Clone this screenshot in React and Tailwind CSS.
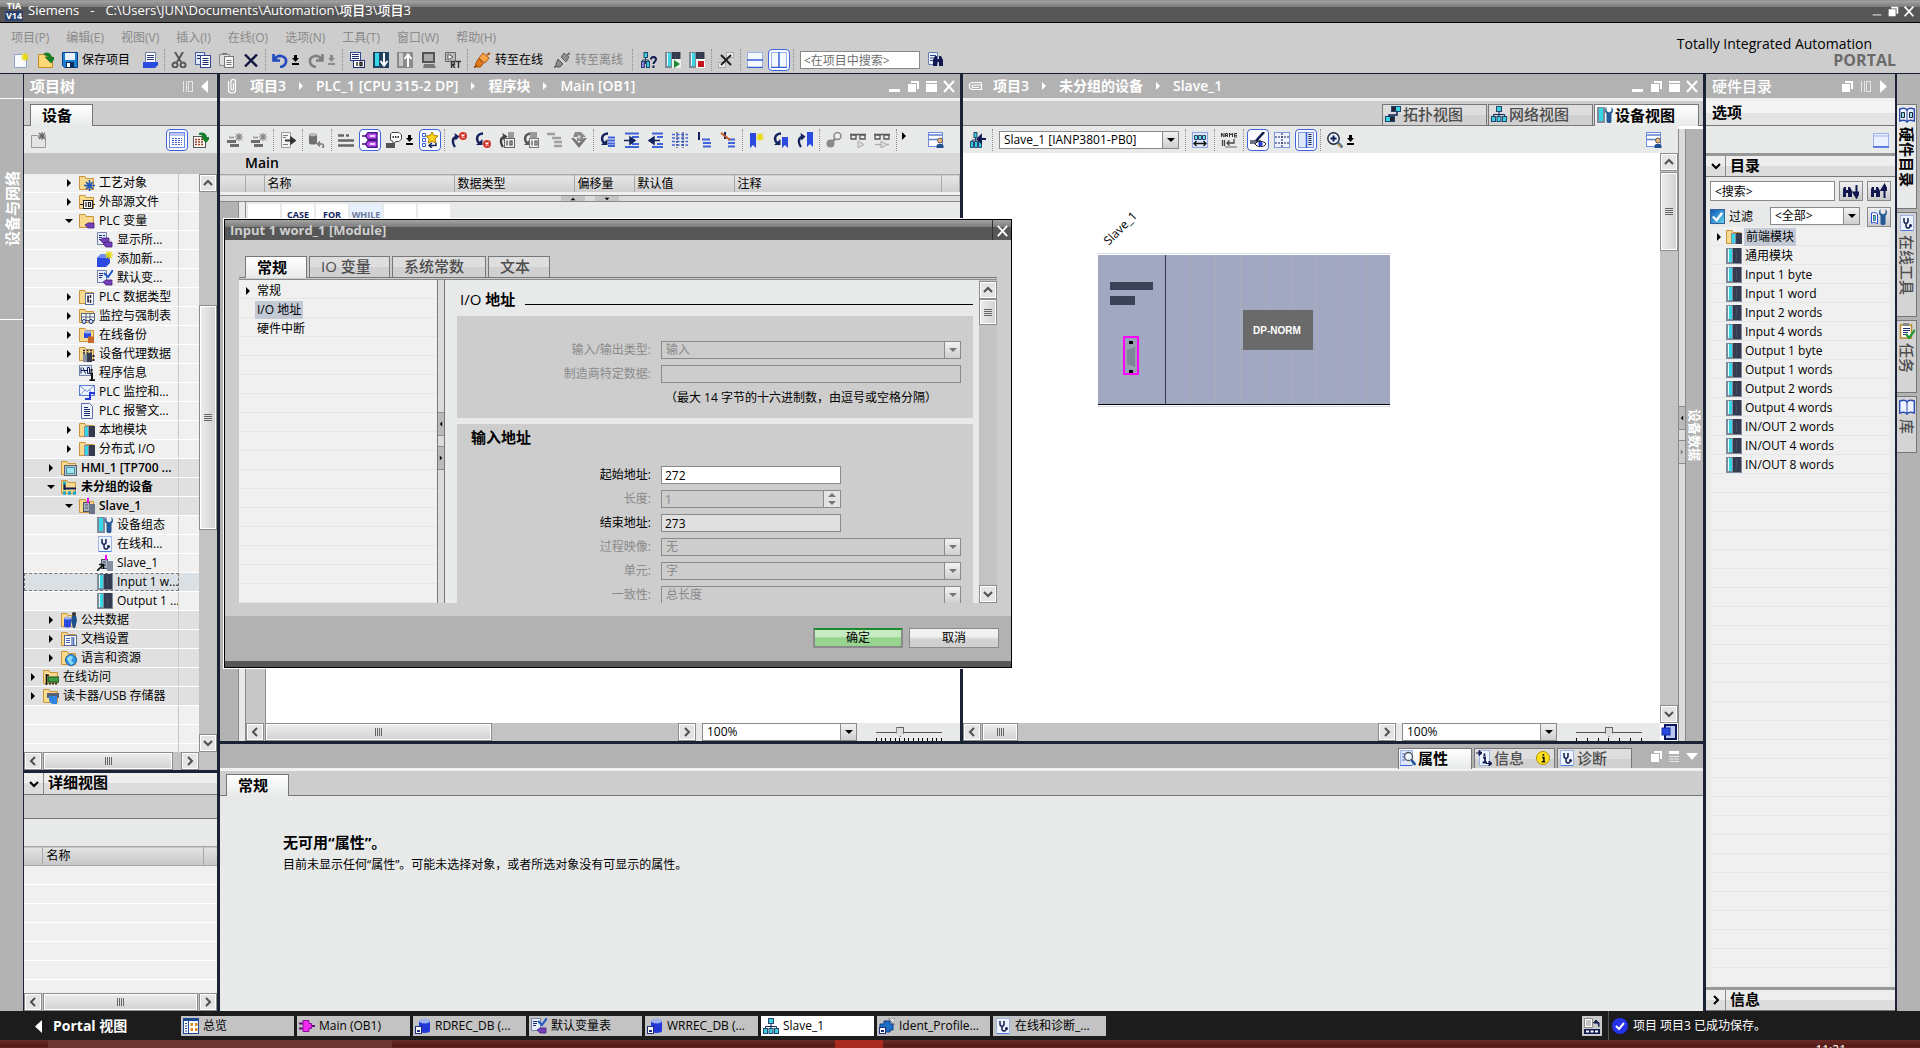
import React from "react";

/* ---------- icon drawings, all on a 16 x 16 grid ---------- */

const folder = (
  <path d="M.5 1.5h5.5l1 2H14.5v11H.5z" fill="#f8d98e" stroke="#c8953a" />
);
const doc = <path d="M2.5 .5h8l3 3v12h-11z" fill="#eef2fb" stroke="#5b6fae" />;
const mod = (
  <g>
    <rect width="16" height="16" fill="#7f899c" />
    <rect x="2" y="1" width="4" height="13" fill="#35d6e6" />
    <rect x="2" y="1" width="1" height="13" fill="#e6fbff" />
    <rect x="7" y="0" width="8" height="15" fill="#343b4f" />
    <rect x="10" y="2" width="1" height="11" fill="#434b62" />
  </g>
);
const star = (x, y, c = "#e8d800") => (
  <path
    d={`M${x} ${y - 4}v8M${x - 4} ${y}h8M${x - 3} ${y - 3}l6 6M${x + 3} ${y - 3}l-6 6`}
    stroke={c}
    strokeWidth="1.2"
  />
);
const lines = (c) => <path d="M8 5.5h7M8 8.5h7M8 11.5h7M8 14h7" stroke={c} strokeWidth="2" />;
const hook = (c = "#14235e") => (
  <g>
    <path d="M8 1.5C1 2 1 8 4 11" stroke={c} strokeWidth="2.4" />
    <path d="M1 13h6.5V7z" fill={c} />
  </g>
);
const hookUp = (c = "#14235e") => (
  <g>
    <path d="M4 15C1 11 1 6 5 5" stroke={c} strokeWidth="2.4" />
    <path d="M3.5 1l5 3.500-4 4z" fill={c} />
  </g>
);
const steth = (
  <g>
    <rect x="1.5" y=".5" width="13" height="15" fill="#eef4ff" stroke="#9db4e4" />
    <path d="M2 15.5h12" stroke="#4f7be0" />
    <path d="M5 3v3c0 3 4 3 4 0V3M7 8v3c0 2.500 3 2.500 4 1" stroke="#111c50" strokeWidth="1.5" />
    <circle cx="11.5" cy="10.5" r="1.5" fill="#111c50" />
  </g>
);
const tag = (x, y, c = "#7440b8") => <path d={`M${x} ${y + 2}l3-2h6v5h-6z`} fill={c} stroke="#45207c" strokeWidth=".8" />;
const net = (
  <g>
    <path d="M8 5v4M2.5 12V8.500h11V12M8 8v4" stroke="#14235e" />
    <rect x="5.5" y=".5" width="5" height="5" fill="#39cfe0" stroke="#26466e" />
    <rect x=".5" y="10.5" width="4" height="5" fill="#39cfe0" stroke="#26466e" />
    <rect x="6" y="10.5" width="4" height="5" fill="#39cfe0" stroke="#26466e" />
    <rect x="11.5" y="10.5" width="4" height="5" fill="#39cfe0" stroke="#26466e" />
  </g>
);
const binoc = (x = 3, c = "#12184f") => (
  <g fill={c}>
    <path d={`M${x} 14V8l2-4h2v10zM${x + 6} 14V4h2l2 4v6z`} />
    <rect x={x + 3} y="7" width="4" height="3" />
  </g>
);
const dbase = (
  <g>
    <path d="M4 3v10c0 2.500 11 2.500 11 0V3z" fill="#2438d8" />
    <ellipse cx="9.5" cy="3" rx="5.5" ry="2.5" fill="#9db2ea" />
    <rect x=".5" y="8.5" width="6" height="7" fill="#fff" stroke="#1b2f78" />
    <rect x="2" y="12" width="3" height="2" fill="#1b2f78" />
  </g>
);
const wrench = <path d="M9.5 0v4l2.500 1.500L14.500 4V0c2 2 2 5 0 6.500v8c0 2-5 2-5 0v-8C7.500 5 7.500 2 9.500 0z" fill="#235b97" />;
const device = (c = "#343b4f") => (
  <g>
    <rect x="4.5" y="4.5" width="6" height="9" fill="#a9b0c0" stroke="#4b5368" />
    <path d="M6 7h3M6 10h3" stroke="#4b5368" />
    <rect x="10" y="6" width="6" height="10" fill={c} />
    <path d="M9 0v5" stroke="#f0f" strokeWidth="2" />
  </g>
);

const ICONS = {
  newp: <g><path d="M.5 2.500h8l4 4v9H.5z" fill="#f7faff" stroke="#8fa3d4" />{star(11, 5)}</g>,
  open: <g><path d="M.5 2.500h6l1 2h7v11H.5z" fill="#ffd977" stroke="#c58b22" /><path d="M6 2.500c4-2.500 7 0 7 4M9 6l4 4 3-4z" stroke="#15802a" strokeWidth="2" fill="#15802a" /></g>,
  save: <g><path d="M.5 .5h15v15h-13l-2-2z" fill="#1d7fd4" stroke="#0d3f86" /><rect x="3" y="1" width="10" height="7" fill="#e8f1fb" /><rect x="4" y="10" width="8" height="6" fill="#0d2b5a" /><rect x="5" y="11" width="3" height="4" fill="#fff" /></g>,
  print: <g><rect x="3.5" y=".5" width="10" height="10" fill="#fff" stroke="#7482aa" /><path d="M5 3.500h7M5 5.500h7M5 7.500h7" stroke="#2a3b80" /><path d="M1 10h15v3l-3 3H1z" fill="#2b4be0" /></g>,
  cut: <path d="M4 0l6 10M12 0L6 10M4 10.500a2.500 2.500 0 1 0 .1 0zM12 10.500a2.500 2.500 0 1 0 .1 0z" stroke="#555" strokeWidth="1.9" />,
  copy: <g><rect x=".5" y=".5" width="9" height="12" fill="#dfe8fb" stroke="#4d63a8" /><rect x="5.5" y="3.5" width="10" height="12" fill="#fff" stroke="#33478f" /><path d="M7.500 6.500h6M7.500 8.500h6M7.500 10.500h6M7.500 12.500h6M2 3.500h3M2 6.500h3" stroke="#1b2c70" /></g>,
  paste: <g><path d="M.5 2.500h10v11H.5z" fill="#ddd" stroke="#8a8a8a" /><rect x="5.5" y="4.5" width="9" height="11" fill="#f4f4f4" stroke="#777" /><path d="M7.500 8.500h5M7.500 10.500h5M7.500 12.500h5M3 1.500h5" stroke="#777" /></g>,
  del: <path d="M2 2.500l12 12M14 2.500l-12 12" stroke="#10163f" strokeWidth="2.4" />,
  undo: <path d="M1.500 2v6.500H8M3 7c4-6 12-2 11 3-.5 2.500-2 4.500-6 5" stroke="#2149c0" strokeWidth="2.6" />,
  redo: <path d="M14.500 2v6.500H8M13 7C9 1 1 5 2 10c.5 2.500 2 4.500 6 5" stroke="#808080" strokeWidth="2.6" />,
  compile: <g><rect x="1.5" y=".5" width="10" height="8" fill="#fff" stroke="#33478f" /><path d="M3 2.500h7M3 4.500h7M3 6.500h7" stroke="#1b2c70" /><rect x="4.5" y="8.5" width="11" height="7" fill="#fff" stroke="#1b2c70" /><path d="M8 10v4M11 10.500h2v3h-2z" stroke="#111" strokeWidth="1.3" /></g>,
  dl: <g><rect width="16" height="16" fill="#20415f" /><rect x="2" y="1" width="4" height="13" fill="#35d6e6" /><path d="M11 1v12M7.500 9l3.500 4.500L14.500 9" stroke="#fff" strokeWidth="2" /></g>,
  ul: <g><rect width="16" height="16" fill="#8b8b8b" /><rect x="2" y="1" width="4" height="13" fill="#c9c9c9" /><path d="M11 15V3M7.500 7L11 2.500 14.500 7" stroke="#fff" strokeWidth="2" /></g>,
  sim: <g><rect x="2" y="1" width="11" height="9" fill="#aaa" stroke="#555" strokeWidth="2" /><path d="M3 12h10l2 4H2z" fill="#777" /></g>,
  rt: <g><path d="M.5 .5h10v9H.5z" fill="#bbb" stroke="#666" /><path d="M3 2l5 3-5 3z" fill="#fff" stroke="#555" /><path d="M6.500 16V9.500H9l.5 3H7l3 3.500M10.500 9.500H16M13.500 9.500V16" stroke="#333" strokeWidth="1.4" /></g>,
  plug: <g><path d="M9 1l6 5-4 5-6-5z" fill="#f8a545" stroke="#b4580d" /><path d="M4.500 6.500l5 4.500-3 4H3l-1.500-3z" fill="#e5781a" stroke="#a34d08" /><path d="M0 16l3-3M13 3l3-2" stroke="#a34d08" strokeWidth="2" /></g>,
  unplug: <g><path d="M10 1l5 4-3 5-5-5z" fill="#8d8d8d" stroke="#666" /><path d="M4 7l5 5-3 3H3l-1-3z" fill="#8d8d8d" stroke="#555" /><path d="M0 16l3-3M13 3l3-2" stroke="#666" strokeWidth="2" /></g>,
  access: <g><path d="M4.500 4v8M1.500 12V8h6v4" stroke="#26466e" /><rect x="3" y=".5" width="3.5" height="5" fill="#39cfe0" stroke="#26466e" /><rect x=".5" y="9.5" width="3" height="6" fill="#9a78d8" stroke="#26466e" /><rect x="5.5" y="9.5" width="3" height="6" fill="#39cfe0" stroke="#26466e" /><path d="M10 7.500c0-3.500 5-3.500 5 0 0 2-2.500 2-2.500 4.500M12.500 13.500V16" stroke="#111c50" strokeWidth="2" /></g>,
  start: <g>{mod}<rect x="7" y="7" width="9" height="9" fill="#e9f5e9" /><path d="M9 8l6 4-6 4z" fill="#1d8a2f" /></g>,
  stop: <g>{mod}<rect x="7" y="7" width="9" height="9" fill="#fff" /><rect x="9" y="9" width="6" height="6" fill="#c4161c" /></g>,
  xref: <g><rect x="8.5" y=".5" width="7" height="5" fill="#eee" stroke="#aaa" /><rect x=".5" y="10.5" width="7" height="5" fill="#eee" stroke="#aaa" /><path d="M3 3l10 10M13 3L3 13" stroke="#222" strokeWidth="2" /></g>,
  splitH: <g><rect x=".5" y=".5" width="15" height="15" fill="#f4f8ff" stroke="#9db2ea" /><path d="M0 8h16M0 15.500h16" stroke="#3560d8" strokeWidth="1.5" /></g>,
  splitV: <g><rect x=".5" y=".5" width="15" height="15" fill="#f4f8ff" stroke="#9db2ea" /><path d="M8 0v16M0 15.500h16" stroke="#3560d8" strokeWidth="1.5" /></g>,
  find: <g><path d="M.5 .5h9v12h-9z" fill="#e7eefc" stroke="#6d80b8" /><path d="M2 3.500h6M2 6h6M2 8.500h3" stroke="#33478f" />{binoc(5)}</g>,
  newGray: <g><path d="M.5 3.500h6l1 2h7v10H.5z" fill="#e4e4e4" stroke="#999" />{star(11, 4, "#666")}</g>,
  list: <g><rect x=".5" y=".5" width="15" height="15" fill="#fff" stroke="#6f8be0" /><rect x="1" y="1" width="14" height="3" fill="#b7c6f2" /><path d="M3 6.500h10M3 8.500h10M3 10.500h10M3 12.500h10" stroke="#3f5fb8" strokeDasharray="2 1" /></g>,
  gridArrow: <g><rect x=".5" y="4.5" width="12" height="11" fill="#fff" stroke="#555" /><path d="M2 7.500h9M2 10h9M2 12.500h9" stroke="#a33a1a" strokeWidth="1.3" strokeDasharray="2 1" /><path d="M6 2c5-1.500 7 1 7 4M10 6l3 3.500L16 6z" stroke="#15802a" strokeWidth="2" fill="#15802a" /></g>,
  addRow: <g><path d="M0 9.500h9M3 13.500h9" stroke="#6d6d6d" strokeWidth="3" /><path d="M2 5.500h5" stroke="#a5a5a5" strokeWidth="2" />{star(12, 5, "#888")}</g>,
  goDoc: <g><path d="M1.500 .5h9v15h-9z" fill="#f4f4f4" stroke="#9a9a9a" /><path d="M3 3.500h5M3 5.500h3M3 12.500h5" stroke="#777" /><path d="M5 8.500h7M11 5.500l4 3-4 3z" stroke="#333" strokeWidth="1.8" fill="#333" /></g>,
  dbBack: <g><path d="M0 2v9c0 2 8 2 8 0V2z" fill="#707070" /><ellipse cx="4" cy="2.5" rx="4" ry="1.8" fill="#bbb" /><path d="M9 12h4c2 0 2 3.500 0 3.500M11 9.500L8.500 12l2.500 2.500" stroke="#777" strokeWidth="1.5" /></g>,
  blocks: <path d="M0 3.500h6M0 8.500h16M0 13.500h16M8 3.500h3" stroke="#666" strokeWidth="2.5" />,
  tags: <g><path d="M6 .7h9v6.600H6L3.500 4zM6 8.700h9v6.600H6L3.500 12z" fill="#b74fe8" stroke="#4a1488" strokeWidth="1.4" /><path d="M0 4h4M0 12h4" stroke="#4a1488" strokeWidth="1.6" /><path d="M8 4h5M8 12h5" stroke="#fff" strokeWidth="1.5" /></g>,
  comment: <g><path d="M6 .5h7l2.500 2.500v4L13 9.500h-3L7 12V9.500L4.500 8V2z" fill="#fff" stroke="#444" /><path d="M6.500 5h7" stroke="#444" strokeDasharray="1.5 1" strokeWidth="2" /><path d="M0 11h9v5H0z" fill="#555" /></g>,
  fav: <g><path d="M.5 1.500h3v3h-3zM.5 6.500h3v3h-3zM.5 11.500h3v3h-3z" stroke="#3560d8" /><path d="M10 0l2 3.500 4 .5-3 3 .7 4L10 9.300 6.300 11 7 7 4 4l4-.5z" fill="#ffd21c" stroke="#b17c00" /><path d="M14 11v2.500H8M10 11l-3 2.500 3 2.500" stroke="#14235e" strokeWidth="1.5" /></g>,
  errUp: <g>{hookUp()}<circle cx="12" cy="4" r="4" fill="#d2332a" /><path d="M10.500 2.500l3 3M13.500 2.500l-3 3" stroke="#fff" strokeWidth="1.3" /></g>,
  errDn: <g>{hook()}<circle cx="12" cy="12" r="4" fill="#d2332a" /><path d="M10.500 10.500l3 3M13.500 10.500l-3 3" stroke="#fff" strokeWidth="1.3" /></g>,
  upDoc: <g>{hookUp("#444")}<rect x="9" y="0" width="6" height="7" fill="#999" /><rect x="5.5" y="6.5" width="10" height="9" fill="#eee" stroke="#666" /><path d="M8 8.500v5M11 9h2v4h-2z" stroke="#444" strokeWidth="1.2" /></g>,
  dnDoc: <g>{hook("#555")}<rect x="7" y="0" width="7" height="6" fill="#999" /><rect x="6.5" y="6.5" width="9" height="9" fill="#eee" stroke="#777" /><path d="M9 8.500v5M12 9h2v4h-2z" stroke="#555" strokeWidth="1.2" /></g>,
  indent: <path d="M0 2h8M5 6h9M7 10h8M7 14h8" stroke="#a0a0a0" strokeWidth="2.3" />,
  expand: <g><path d="M4 0h6l5 5h-3v4H6V5H2z" fill="#8a8a8a" /><path d="M0 6h3l5 5 5-5h3l-8 10z" fill="#777" /><path d="M8 3v4M6 5h4" stroke="#e8e8e8" /></g>,
  gotoLine: <g>{hook()}{lines("#3f63dc")}</g>,
  indR: <g><path d="M1 1.500h14M8 5h7M8 12h7M1 15h14" stroke="#3f63dc" strokeWidth="2" /><path d="M0 8.500h7M6 5l5 3.500L6 12z" stroke="#14235e" strokeWidth="1.5" fill="#14235e" /></g>,
  indL: <g><path d="M4 1.500h11M9 5h6M9 12h6M4 15h11" stroke="#3f63dc" strokeWidth="2" /><path d="M12 8.500H4M6 5L1 8.500 6 12z" stroke="#14235e" strokeWidth="1.5" fill="#14235e" /></g>,
  align: <g><path d="M0 2.500h16M0 6h16M0 9.500h16M0 13h16" stroke="#3f63dc" strokeWidth="1.7" strokeDasharray="3 1.5" /><path d="M5 0v16M11 0v16" stroke="#14235e" strokeDasharray="2 1" /></g>,
  cmt: <g><path d="M3 0v8" stroke="#14235e" strokeWidth="2" /><path d="M6 7.500h8M7 11h8M7 14.500h8" stroke="#3f63dc" strokeWidth="2.2" /></g>,
  uncmt: <g><path d="M8 7.500h7M8 11h7M8 14.500h7" stroke="#3f63dc" strokeWidth="2.2" /><path d="M5 0v7" stroke="#14235e" strokeWidth="2" /><path d="M1 1l9 7" stroke="#c8551c" strokeWidth="1.8" /></g>,
  bmNew: <g><path d="M1 1h6v15l-3-3-3 3z" fill="#2b4be0" />{star(11, 5)}</g>,
  bmNext: <g>{hook()}<path d="M9 5h6v11l-3-3-3 3z" fill="#2b4be0" /></g>,
  bmPrev: <g>{hookUp()}<path d="M10 0h6v15l-3-3-3 3z" fill="#2b4be0" /></g>,
  searchGray: <g><circle cx="11.5" cy="4" r="3.5" fill="#eee" stroke="#888" strokeWidth="1.5" /><path d="M9 7l-3 3" stroke="#888" strokeWidth="2.5" /><circle cx="4.5" cy="11.5" r="4" fill="#8a8a8a" /></g>,
  glasses: <g><path d="M0 2.500h16M1 3h5v4H1zM10 3h5v4h-5z" stroke="#555" strokeWidth="1.3" /><path d="M8 9l6 3.500L8 16z" fill="#ddd" stroke="#aaa" /></g>,
  glasses2: <g><path d="M0 2.500h16M1 3h5v4H1zM10 3h5v4h-5z" stroke="#555" strokeWidth="1.3" /><path d="M1 12.500h14" stroke="#aaa" strokeWidth="1.3" /><path d="M7 9l6 3.500L7 16z" fill="#ddd" stroke="#aaa" /></g>,
  panelUser: <g><rect x=".5" y=".5" width="14" height="14" fill="#fff" stroke="#6f8be0" /><path d="M1 7.500h13M1 3h13" stroke="#5b7fd0" strokeWidth="1.5" /><circle cx="12" cy="8.5" r="2.5" fill="#e9b77a" stroke="#333" strokeWidth=".7" /><path d="M8.500 16v-2c0-3 7-3 7 0v2z" fill="#1e4f8f" /></g>,
  panel: <g><rect x=".5" y="1.5" width="15" height="13" fill="#eaf0ff" stroke="#9db2ea" /><path d="M1 4h14" stroke="#9db2ea" /><path d="M0 15h16" stroke="#3f63dc" strokeWidth="1.5" /></g>,
  topo: <g><rect x="6.5" y=".5" width="9" height="5" fill="#35d6e6" stroke="#26466e" /><rect x=".5" y="10.5" width="9" height="5" fill="#35d6e6" stroke="#26466e" /><path d="M12 5.500V9H4v2" stroke="#111c50" strokeWidth="1.5" /><rect x="7" y="1" width="4" height="4" fill="#223" /><rect x="5" y="11" width="4" height="4" fill="#223" /></g>,
  net,
  devView: <g><rect width="8" height="16" fill="#7f899c" /><rect x="2" y="1" width="4" height="13" fill="#35d6e6" />{wrench}</g>,
  netIn: <g><path d="M5.500 4v8M2 12V8h7v4" stroke="#26466e" /><rect x="4" y=".5" width="3" height="5" fill="#39cfe0" stroke="#26466e" /><path d="M.5 9.500h3v6h-3zM4.500 9.500h3v6h-3zM8.500 9.500h3v6h-3z" fill="#39cfe0" stroke="#26466e" /><path d="M16 7H9M11 3.500L7.500 7 11 10.500z" stroke="#111c50" strokeWidth="1.8" fill="#111c50" /></g>,
  width: <g><rect x=".5" y=".5" width="15" height="15" fill="#dfe8fb" stroke="#8fa6e6" /><path d="M2.500 3.500h3v4h-3zM6.500 3.500h3v4h-3zM10.500 3.500h3v4h-3z" fill="#6fdcea" stroke="#26466e" /><path d="M2 11.500h12M4.500 9L2 11.500 4.500 14M11.500 9l2.500 2.500-2.500 2.500" stroke="#111" strokeWidth="1.3" /></g>,
  nameBack: <g><path d="M.5 5V1l2.500 4V1M4.500 5V1.500h2V5M4.500 3.500h2M8.500 5V1l1.500 2 1.500-2v4M16 1.500h-2.500V5H16M13.500 3.300H16" stroke="#333" /><path d="M1.500 8v6M3.500 8v6M13 7v4H6M8.500 8.500L6 11l2.500 2.500" stroke="#444" strokeWidth="1.3" /><path d="M4 15h12" stroke="#aaa" strokeWidth="2" /></g>,
  penEye: <g><path d="M0 8h11v4H0z" fill="#6b7387" /><path d="M14 0L6 9" stroke="#111c50" strokeWidth="2.6" /><path d="M5 12c2-3.500 9-3.500 11 0-2 3.500-9 3.500-11 0z" fill="#fff" stroke="#222" /><circle cx="10.5" cy="12" r="2.2" fill="#2438d8" /></g>,
  crosshair: <g><rect x=".5" y=".5" width="15" height="15" fill="#eef3ff" stroke="#7e97dd" /><path d="M8 1v14M1 5h14M1 11h14" stroke="#14235e" strokeDasharray="2 1" /></g>,
  cols: <g><rect x=".5" y=".5" width="15" height="15" fill="#dfe8fb" stroke="#7e97dd" /><path d="M8.500 0v16" stroke="#3560d8" strokeWidth="1.5" /><path d="M12 2v12" stroke="#14235e" strokeWidth="3" strokeDasharray="1 1" /></g>,
  zoomIn: <g><circle cx="6.5" cy="6.5" r="5.7" fill="#e6f1ff" stroke="#223" strokeWidth="1.4" /><path d="M3.500 6.500h6M6.500 3.500v6" stroke="#111c50" strokeWidth="2" /><path d="M10.500 10.500l5 5" stroke="#4a6f96" strokeWidth="3" /><path d="M11 12l3 3" stroke="#c8953a" strokeWidth="1.5" /></g>,
  fTech: <g>{folder}<path d="M10.500 5v11M5 10.500h11M7 7l7 7M14 7l-7 7" stroke="#1d57b8" strokeWidth="1.6" /></g>,
  fSrc: <g>{folder}<rect x="4.5" y="6.5" width="9" height="8" fill="#fff" stroke="#222" /><path d="M7 8v5M9.500 8.500h2v4h-2zM1 10.500h3M14 10.500h2" stroke="#222" strokeWidth="1.2" /></g>,
  fTag: <g>{folder}{tag(6, 10)}</g>,
  tagAll: <g><path d="M.5 .5h9v12h-9z" fill="#e7eefc" stroke="#7482aa" /><path d="M2 3.500h3M2 5.500h3M2 7.500h2M6 3.500h2" stroke="#1b2c70" />{tag(3, 6)}{tag(6, 10)}</g>,
  tagNew: <g><path d="M0 7l4-4h9v9l-4 4H0z" fill="#2b4be0" /><path d="M0 7l4-4h9L9 7z" fill="#6f8bf0" />{star(12, 4)}</g>,
  tagDef: <g><path d="M.5 .5h9v12h-9z" fill="#e7eefc" stroke="#7482aa" /><path d="M2 3.500h4M2 5.500h4M2 7.500h3" stroke="#1b2c70" /><path d="M7 3l4 4 5-7" stroke="#1d57c8" strokeWidth="2" />{tag(6, 10)}</g>,
  fType: <g>{folder}<rect x="6.5" y="4.5" width="8" height="11" fill="#fff" stroke="#5b6f9e" /><path d="M9 6.500v7M9 8h1M9 12h1M11.500 6v3M11.500 10.500v3.500" stroke="#223" strokeWidth="1.5" /></g>,
  fWatch: <g>{folder}<rect x="2.5" y="5.5" width="13" height="7" fill="#fff" stroke="#567" /><path d="M3 9h12M7 6v6M11 6v6" stroke="#567" /><circle cx="5" cy="13.5" r="2" fill="#cfe0ff" stroke="#1b2c70" /><circle cx="12" cy="13.5" r="2" fill="#cfe0ff" stroke="#1b2c70" /></g>,
  fBackup: <g>{folder}<path d="M5 5h7v6H5z" fill="#2b4be0" /><ellipse cx="8.5" cy="5" rx="3.5" ry="1.5" fill="#9db2ea" /><path d="M9 9.500h6V16H9z" fill="#c9662b" /></g>,
  fProxy: <g>{folder}<path d="M4 4.500h9M4 7h9" stroke="#223" strokeWidth="1.5" strokeDasharray="2 1.5" /><rect x="4" y="8" width="4" height="8" fill="#8790a2" /><rect x="8" y="7" width="5" height="9" fill="#343b4f" /><path d="M14.500 9v2M14.500 13v2" stroke="#223" strokeWidth="2" /></g>,
  info: <g><rect x=".5" y=".5" width="12" height="10" fill="#e7eefc" stroke="#7482aa" /><path d="M2 2.500v6M4 2.500l2.500 6M8.500 2.500h2v6h-2zM2 5.500h6" stroke="#111c50" /><path d="M12.500 4v2.500M11 8.500h2V15M10.500 15.200H16" stroke="#111" strokeWidth="2" /></g>,
  mail: <g><rect x=".5" y="1.5" width="15" height="10" fill="#eef3ff" stroke="#5b7fd0" /><path d="M1 2l7 5.500L15 2M1 11l5-5M15 11l-5-5" stroke="#7e97dd" /><path d="M6 15h5V9h5" stroke="#2438d8" strokeWidth="2" /></g>,
  text: <g>{doc}<path d="M5 4.500h4M5 6.500h6M5 8.500h6M5 10.500h6M5 12.500h6" stroke="#1b2c70" strokeWidth="1.2" /></g>,
  fMod: <g>{folder}<rect x="5" y="4" width="5" height="11" fill="#8790a2" /><rect x="6" y="5" width="3" height="9" fill="#35d6e6" /><rect x="10" y="4" width="6" height="11" fill="#343b4f" /></g>,
  fHmi: <g>{folder}<rect x="3.5" y="5.5" width="12" height="10" fill="#b9bfcb" stroke="#596176" /><rect x="5.5" y="7.5" width="8" height="6" fill="#9fe6f2" stroke="#3f94a6" /></g>,
  fDev: <g>{folder}<path d="M3.500 4v7M3 9.500h12" stroke="#111c50" strokeWidth="2.2" /><path d="M2 14h3M7 14h3M12 14h3" stroke="#1fa8c0" strokeWidth="3.5" /><path d="M2 4h3" stroke="#1fa8c0" strokeWidth="3" /></g>,
  fSlave: <g>{folder}{device("#6b7387")}</g>,
  slave: <g>{device("#8790a2")}<path d="M0 16l6-6M2 9.500h4.500V14" stroke="#111" strokeWidth="1.6" /></g>,
  steth,
  mod,
  fCommon: <g>{folder}<path d="M3 6h7v8c0 2-7 2-7 0z" fill="#2b4be0" /><ellipse cx="6.5" cy="6" rx="3.5" ry="1.5" fill="#9db2ea" /><path d="M11 3.500h4l1 5-2 7.500h-2l-2-7.500z" fill="#1e4f8f" /><circle cx="13" cy="2" r="2" fill="#333" /></g>,
  fDoc: <g>{folder}<rect x="3.5" y="4.5" width="12" height="10" fill="#fff" stroke="#56688f" /><path d="M5 7.500h4M5 9.500h4M5 11.500h4M11 6v8M12.700 6v8" stroke="#3f5fb8" strokeWidth="1.2" /></g>,
  fLang: <g>{folder}<circle cx="10" cy="10" r="5.5" fill="#2f96e0" stroke="#1a5fa8" /><path d="M6 8l3.500-2.500L12 7l-2 4 3 2-3 2-3-4z" fill="#8fdcf0" /></g>,
  fOnline: <g>{folder}<path d="M3.500 5v11M3 6.500h3" stroke="#111" strokeWidth="1.6" /><rect x="5" y="8" width="11" height="5" fill="#3f9b46" stroke="#14501c" /><path d="M6 14.500h8" stroke="#333" strokeWidth="2" strokeDasharray="2 1" /></g>,
  fCard: <g>{folder}<rect x="4" y="5" width="12" height="5" fill="#596176" /><path d="M6 8h8v8H9l-3-3z" fill="#2f86e0" /></g>,
  overview: <g><rect x=".5" y=".5" width="15" height="15" fill="#fff" stroke="#1b4a94" /><rect width="16" height="3" fill="#1b4a94" /><path d="M5.500 3v13" stroke="#1b4a94" /><path d="M7.500 6.500H10M12 6.500h2.500M7.500 11.500H10M12 11.500h2.500" stroke="#d98a1c" strokeWidth="3" /><path d="M2 5.500h2M2 8h2M2 10.500h2M2 13h2" stroke="#1b4a94" /></g>,
  ob: <g><path d="M0 5.500h5M0 10.500h5M11 8h5" stroke="#60107c" strokeWidth="2" /><path d="M4 2.500h6v3h2.500v5H10v3H4z" fill="#f12af1" stroke="#8a0f9c" /></g>,
  ident: <g><path d="M1 6h4V3h6v3h3v6h-3v2H6v-2H1z" fill="#1d6fc4" stroke="#0d3f86" /><path d="M9 0h7v7z" fill="#ddd" stroke="#888" /><rect x=".5" y="9.5" width="6" height="6" fill="#fff" stroke="#1b2f78" /><rect x="2" y="12" width="3" height="2" fill="#1b2f78" /></g>,
  dbase,
  props: <g><rect x=".5" y=".5" width="12" height="15" fill="#dfe8fb" stroke="#9db4e4" /><path d="M2 4h3M2 7h2M2 10h3M0 15.500h12" stroke="#3f63dc" /><circle cx="8.5" cy="6.5" r="4" fill="#eef6ff" stroke="#555" strokeWidth="1.3" /><path d="M11.500 10l4 5" stroke="#23539c" strokeWidth="2.6" /></g>,
  infoTab: <g><rect x="3.5" y=".5" width="10" height="15" fill="#eef4ff" stroke="#9db4e4" /><path d="M0 3h4M3 .5L6 3 3 5.500zM10 13.500h4M13 11l3 2.500-3 2.500z" stroke="#111c50" fill="#111c50" /><path d="M8.500 3.500V6M7 7.500h2V12M6.500 12.500H11" stroke="#111c50" strokeWidth="1.8" /></g>,
  infoDot: <g><circle cx="8" cy="8" r="7.5" fill="#ffdf1c" stroke="#a98b00" /><path d="M8.500 3.500v2M7 7.500h2V12M6.500 12.200h4" stroke="#111" strokeWidth="1.8" /></g>,
  binDn: <g>{binoc(-1)}<path d="M13.500 2v9M10.500 9.500l3 5 2.500-5z" stroke="#12184f" strokeWidth="2" fill="#12184f" /></g>,
  binUp: <g>{binoc(-1)}<path d="M13.500 15V6M10.500 7l3-5L16 7z" stroke="#12184f" strokeWidth="2" fill="#12184f" /></g>,
  catWrench: <g><path d="M.5 4c3-1 5 0 6 1v10c-1-1.500-3-2-6-1z" fill="#fff" stroke="#2b4be0" /><rect x="2.5" y="6.5" width="2" height="5" fill="#35d6e6" stroke="#223" strokeWidth=".6" />{wrench}</g>,
  book: <g><path d="M.7 2c3-1 6-1 7.300 1 1.300-2 4.300-2 7.300-1v12c-3-1-6-1-7.300 1-1.300-2-4.300-2-7.300-1z" fill="#eef3ff" stroke="#2b4bb0" strokeWidth="1.4" /><path d="M8 3v12" stroke="#2b4bb0" /></g>,
  bookCat: <g><path d="M.7 2c3-1 6-1 7.300 1 1.300-2 4.300-2 7.300-1v12c-3-1-6-1-7.300 1-1.300-2-4.300-2-7.300-1z" fill="#eef3ff" stroke="#2b4bb0" strokeWidth="1.4" /><path d="M8 3v12" stroke="#2b4bb0" /><path d="M2.500 5.500h3v5h-3zM10.500 5.500h3v5h-3z" fill="#8fe0ea" stroke="#223" /></g>,
  task: <g><rect x="1.5" y="2" width="11" height="13" fill="#fff" stroke="#b8862b" strokeWidth="1.5" /><rect x="4" y="0" width="6" height="3" fill="#888" /><path d="M4 5.500h7M4 7.500h7M4 9.500h5M4 11.500h3" stroke="#1b2c70" /><path d="M7 11l3 4 6-8" stroke="#1d9a2f" strokeWidth="2.2" /></g>,
  tray: <g><path d="M.5 .5h8v9h-8z" fill="#fff" stroke="#888" /><path d="M2 3h5M2 5h5M2 7h5" stroke="#888" /><path d="M9.500 5L12 2l2.500 3zM13 4.500h2V9" stroke="#111c50" fill="#111c50" /><rect y="11" width="16" height="5" fill="#111c50" /><path d="M2 13.500h3M6.500 13.500h3M11 13.500h3" stroke="#fff" strokeWidth="2" /></g>,
  ok: <g><circle cx="8" cy="8" r="8" fill="#2433e8" /><path d="M4 8l3 3 5-6" stroke="#fff" strokeWidth="2" /></g>,
  clip: <path d="M4.500 3v9c0 4 7 4 7 0V4c0-3.500-4.500-3.500-4.500 0v6.500c0 2 2.500 2 2.500 0V5" stroke="#fff" strokeWidth="1.2" />,
  clipH: <path d="M14 4.500H6c-5 0-5 7 0 7h8.500v-4.500H6.500c-2 0-2 2.500 0 2.500H12M14.500 4.500v3" stroke="#fff" strokeWidth="1.2" />,
  overviewBtn: <g><rect x="4" y="1" width="11" height="14" fill="#b9c6f2" stroke="#0c1560" strokeWidth="2" /><rect x="1" y="4" width="8" height="7" fill="#2b4be0" stroke="#122aa0" /></g>,
  wMin: <rect x="2" y="11" width="11" height="3" fill="#fff" />,
  wMinThin: <rect x="3" y="12" width="10" height="1" fill="#fff" />,
  wRest: <g fill="#fff"><rect x="3" y="6" width="8" height="8" /><path d="M6 3h8v8h-2V5H6z" /></g>,
  wMax: <g fill="#fff"><rect x="3" y="3" width="11" height="2" /><rect x="3" y="6" width="11" height="8" /></g>,
  wClose: <path d="M3 3l10 11M13 3L3 14" stroke="#fff" strokeWidth="2" />,
  wCols: <g><path d="M4.500 3v11M7.500 3v11" stroke="#e6e6e6" /><rect x="9.5" y="3.5" width="4" height="10" stroke="#e6e6e6" /></g>,
  wRows: <g><rect x="3" y="3" width="10" height="3" fill="#fff" /><path d="M3 8.500h10M3 11h10M3 13.500h10" stroke="#e6e6e6" /></g>,
  wLeft: <path d="M11 2v13L4 8.500z" fill="#fff" />,
  wRight: <path d="M5 2v13l7-6.500z" fill="#fff" />,
  wDown: <path d="M2 5h12l-6 7z" fill="#fff" />,
};

const Icon = ({ n, className = "size-4" }) => (
  <svg viewBox="0 0 16 16" fill="none" aria-hidden="true" className={`shrink-0 ${className}`}>
    {ICONS[n]}
  </svg>
);

/* ---------- small parts ---------- */

const Tool = ({ n, on, label }) => (
  <button
    aria-label={label || n}
    className={`mx-px flex size-[22px] shrink-0 items-center justify-center ${on ? "rounded-sm border border-[#3f63dc] bg-[#fbfcff]" : ""}`}
  >
    <Icon n={n} />
  </button>
);
const Sep = () => <span className="mx-[2px] h-[22px] w-px shrink-0 border-l border-dotted border-[#8d8d8d]" />;
const Caret = ({ dim }) => (
  <svg viewBox="0 0 12 12" className={`size-3 shrink-0 ${dim ? "text-[#8a8a8a]" : "text-black"}`} aria-hidden="true">
    <path d="M0 4h2V1h3v3h2L3.500 8zM0 9h7v2H0z" fill="currentColor" />
  </svg>
);
const Tri = ({ dir = "r", className = "size-[10px]" }) => (
  <svg viewBox="0 0 10 10" className={`shrink-0 ${className}`} aria-hidden="true">
    <path d={{ r: "M3 1l4 4-4 4z", l: "M7 1L3 5l4 4z", d: "M1 3h8L5 7z", u: "M1 7h8L5 3z" }[dir]} fill="currentColor" />
  </svg>
);
const Chevron = ({ dir }) => (
  <svg viewBox="0 0 10 10" className="size-[10px] shrink-0" fill="none" aria-hidden="true">
    <path d={{ r: "M3 1l4 4-4 4", l: "M7 1L3 5l4 4", d: "M1 3l4 4 4-4", u: "M1 7l4-4 4 4" }[dir]} stroke="currentColor" strokeWidth="2" />
  </svg>
);
const ScrollBtn = ({ dir }) => (
  <button aria-label={`scroll ${dir}`} className="flex size-[18px] shrink-0 items-center justify-center border border-[#8d8d8d] bg-[#e4e4e4] text-[#505050] shadow-[inset_0_0_0_1px_#fff]">
    <Chevron dir={dir} />
  </button>
);
const ThumbH = ({ className }) => (
  <div className={`flex h-[18px] shrink-0 items-center justify-center border border-[#8d8d8d] bg-linear-to-b from-[#ededed] to-[#d2d2d2] shadow-[inset_0_0_0_1px_#fff] ${className}`}>
    <span className="h-2 w-[7px] bg-[repeating-linear-gradient(90deg,#666_0_1px,transparent_1px_2px)]" />
  </div>
);
const ThumbV = ({ className }) => (
  <div className={`flex w-[18px] shrink-0 items-center justify-center border border-[#8d8d8d] bg-linear-to-r from-[#ededed] to-[#d2d2d2] shadow-[inset_0_0_0_1px_#fff] ${className}`}>
    <span className="h-[7px] w-2 bg-[repeating-linear-gradient(#666_0_1px,transparent_1px_2px)]" />
  </div>
);
const Combo = ({ id, label, value, disabled, className = "" }) => (
  <div className={`relative flex h-[18px] items-stretch border border-[#8a8a8a] ${disabled ? "bg-[#cdcdcd] text-[#8a8a8a]" : "bg-white text-black"} ${className}`}>
    <select id={id} aria-label={label} disabled={disabled} className="w-full appearance-none pl-1 text-xs leading-4 opacity-100 outline-none">
      <option>{value}</option>
    </select>
    <span className={`pointer-events-none absolute inset-y-0 right-0 flex w-4 items-center justify-center border-l border-[#8a8a8a] bg-linear-to-b from-[#f2f2f2] to-[#cfcfcf] ${disabled ? "text-[#777]" : "text-black"}`}>
      <Tri dir="d" />
    </span>
  </div>
);
const ZoomSlider = ({ value, ticks, label }) => (
  <div className="flex h-[18px] w-[66px] shrink-0 flex-col justify-between">
    <input
      type="range"
      aria-label={label}
      defaultValue={value}
      className="mt-1 h-[10px] w-full appearance-none bg-[linear-gradient(#555,#555)] bg-[length:100%_1px] bg-center bg-no-repeat [&::-webkit-slider-thumb]:h-[10px] [&::-webkit-slider-thumb]:w-2 [&::-webkit-slider-thumb]:appearance-none [&::-webkit-slider-thumb]:border [&::-webkit-slider-thumb]:border-[#666] [&::-webkit-slider-thumb]:bg-[#ddd] [&::-webkit-slider-thumb]:[clip-path:polygon(0_0,100%_0,100%_60%,50%_100%,0_60%)]"
    />
    <div className="flex h-[3px] justify-between">
      {Array.from({ length: ticks }, (_, i) => (
        <span key={i} className="w-px bg-black" />
      ))}
    </div>
  </div>
);
const Tab = ({ icon, tail, on, children, className = "" }) => (
  <button
    role="tab"
    aria-selected={!!on}
    className={`flex shrink-0 items-center gap-[2px] border border-b-0 pb-[2px] text-[15px] leading-5 ${on ? "-mb-px border-[#777] bg-linear-to-b from-white to-[#e8eaea] font-bold text-black" : "border-[#777] bg-linear-to-b from-[#dedede] from-50% to-[#d0d0d0] to-50% font-medium text-[#4d4d4d]"} ${className}`}
  >
    {icon && <Icon n={icon} />}
    <span className="whitespace-nowrap">{children}</span>
    {tail && <Icon n={tail} className="ml-auto size-[14px]" />}
  </button>
);
const Crumbs = ({ items }) => (
  <nav className="flex min-w-0 flex-1 items-center gap-[10px] overflow-hidden text-sm font-semibold whitespace-nowrap text-white">
    {items.map((t, i) => (
      <React.Fragment key={t}>
        {i > 0 && <Tri />}
        <span>{t}</span>
      </React.Fragment>
    ))}
  </nav>
);
const WinBtns = ({ names }) => (
  <div className="flex shrink-0 gap-[2px]">
    {names.map((n) => (
      <button key={n} aria-label={n} className="flex size-4 items-center justify-center"><Icon n={n} /></button>
    ))}
  </div>
);
const PanelHead = ({ children, className = "" }) => (
  <header className={`flex h-[27px] shrink-0 items-center border-b-[3px] border-[#f0f0f0] bg-[#b2b2b2] ${className}`}>{children}</header>
);
const Section = ({ dir, children, className = "" }) => (
  <button className={`flex w-full shrink-0 items-stretch border-b border-[#777] bg-linear-to-b from-[#eee] from-50% to-[#dcdcdc] to-50% text-left ${className}`}>
    <span className="flex w-5 items-center justify-center border-r border-[#8a8a8a]"><Chevron dir={dir} /></span>
    <span className="pl-1 text-[15px] leading-[19px] font-bold">{children}</span>
  </button>
);

/* ---------- data ---------- */

const MENU = ["项目(P)", "编辑(E)", "视图(V)", "插入(I)", "在线(O)", "选项(N)", "工具(T)", "窗口(W)", "帮助(H)"];

const TREE = [
  [2, "r", "fTech", "工艺对象"],
  [2, "r", "fSrc", "外部源文件"],
  [2, "d", "fTag", "PLC 变量"],
  [3, "", "tagAll", "显示所..."],
  [3, "", "tagNew", "添加新..."],
  [3, "", "tagDef", "默认变..."],
  [2, "r", "fType", "PLC 数据类型"],
  [2, "r", "fWatch", "监控与强制表"],
  [2, "r", "fBackup", "在线备份"],
  [2, "r", "fProxy", "设备代理数据"],
  [2, "", "info", "程序信息"],
  [2, "", "mail", "PLC 监控和..."],
  [2, "", "text", "PLC 报警文..."],
  [2, "r", "fMod", "本地模块"],
  [2, "r", "fMod", "分布式 I/O"],
  [1, "r", "fHmi", "HMI_1 [TP700 ...", "dark", "font-semibold"],
  [1, "d", "fDev", "未分组的设备", "dark", "font-bold"],
  [2, "d", "fSlave", "Slave_1", "dark", "font-semibold"],
  [3, "", "devView", "设备组态"],
  [3, "", "steth", "在线和..."],
  [3, "", "slave", "Slave_1"],
  [3, "", "mod", "Input 1 w...", "sel"],
  [3, "", "mod", "Output 1 ..."],
  [1, "r", "fCommon", "公共数据", "dark"],
  [1, "r", "fDoc", "文档设置", "dark"],
  [1, "r", "fLang", "语言和资源", "dark"],
  [0, "r", "fOnline", "在线访问", "dark"],
  [0, "r", "fCard", "读卡器/USB 存储器", "dark"],
];
const INDENT = ["pl-1", "pl-[22px]", "pl-10", "pl-[58px]"];
const TONE = { dark: "bg-[#e0e0e0]", sel: "bg-[#dbe0e4]" };

const CATALOG = [
  "通用模块", "Input 1 byte", "Input 1 word", "Input 2 words", "Input 4 words", "Output 1 byte", "Output 1 words",
  "Output 2 words", "Output 4 words", "IN/OUT 2 words", "IN/OUT 4 words", "IN/OUT 8 words",
];

const OPEN_EDITORS = [
  ["overview", "总览"],
  ["ob", "Main (OB1)"],
  ["dbase", "RDREC_DB (..."],
  ["tagDef", "默认变量表"],
  ["dbase", "WRREC_DB (..."],
  ["net", "Slave_1"],
  ["ident", "Ident_Profile..."],
  ["steth", "在线和诊断_..."],
];

/* ---------- page parts ---------- */

function TitleBar() {
  return (
    <header className="flex h-[23px] shrink-0 items-center border-b border-black bg-[linear-gradient(#8a8a8a,#a2a2a2_1px,#7a7a7a_7px,#575757_7px)] pl-[5px] text-white">
      <span className="flex w-[18px] flex-col text-center text-[9px] leading-[10px] font-bold">
        <span>TIA</span>
        <span className="bg-[#27406e]">V14</span>
      </span>
      <h1 className="ml-[5px] flex gap-[11px] text-[13px] font-medium whitespace-pre">
        <span>Siemens</span>
        <span>-</span>
        <span>C:\Users\JUN\Documents\Automation\项目3\项目3</span>
      </h1>
      <div className="mr-[3px] ml-auto flex">
        {["wMinThin", "wRest", "wClose"].map((n) => (
          <button key={n} aria-label={n} className="px-px"><Icon n={n} className="size-[14px]" /></button>
        ))}
      </div>
    </header>
  );
}

function MainBar() {
  return (
    <div className="flex h-[51px] shrink-0 border-b border-[#141c30] bg-[#cdcdcd]">
      <div className="min-w-0 flex-1">
        <nav className="flex h-[25px] items-center gap-[17px] pt-1 pl-[11px] text-[#8a8a8a]">
          {MENU.map((m) => <button key={m} className="leading-5">{m}</button>)}
        </nav>
        <div className="flex h-6 items-center pl-[10px]">
          <Tool n="newp" /><Tool n="open" /><Tool n="save" />
          <button className="w-14 text-left text-xs leading-5 whitespace-nowrap">保存项目</button>
          <Tool n="print" /><Sep />
          <Tool n="cut" /><Tool n="copy" /><Tool n="paste" /><Tool n="del" /><Sep />
          <Tool n="undo" /><Caret /><Tool n="redo" /><Caret dim /><Sep />
          <Tool n="compile" /><Tool n="dl" /><Tool n="ul" /><Tool n="sim" /><Tool n="rt" /><Sep />
          <Tool n="plug" />
          <button className="w-14 pl-px text-left text-xs leading-5 whitespace-nowrap">转至在线</button>
          <Tool n="unplug" />
          <button className="w-14 pl-px text-left text-xs leading-5 whitespace-nowrap text-[#868686]">转至离线</button>
          <Sep />
          <span className="flex pl-[2px]"><Tool n="access" /><Tool n="start" /><Tool n="stop" /></span><Sep />
          <Tool n="xref" /><Sep />
          <Tool n="splitH" /><Tool n="splitV" on /><Sep />
          <input aria-label="在项目中搜索" placeholder="<在项目中搜索>" className="ml-1 h-[18px] w-[120px] shrink-0 border border-[#8a8a8a] bg-white px-[3px] leading-4 placeholder:text-[#6f6f6f]" />
          <span className="ml-1"><Tool n="find" /></span>
        </div>
      </div>
      <div className="flex shrink-0 flex-col pt-3 pr-6 text-right">
        <span className="pr-6 text-sm leading-[17px] font-medium">Totally Integrated Automation</span>
        <span className="text-base leading-[17px] font-bold text-[#6b6b6b]">PORTAL</span>
      </div>
    </div>
  );
}

function ProjectTree() {
  return (
    <aside className="flex w-[197px] shrink-0 flex-col border-r-[3px] border-l border-[#1a2236]">
      <PanelHead className="pr-1 pl-[6px]">
        <h2 className="flex-1 text-[15px] font-bold text-white">项目树</h2>
        <WinBtns names={["wCols", "wLeft"]} />
      </PanelHead>
      <div className="flex h-[25px] shrink-0 items-stretch border-b border-[#777] bg-[#cdcdcd] pt-[3px] pl-[6px]">
        <Tab on className="w-[63px] pl-[11px]">设备</Tab>
      </div>
      <div className="flex h-[27px] shrink-0 items-center bg-[#e8eaea] px-[3px]">
        <Tool n="newGray" />
        <span className="ml-auto flex pr-px"><Tool n="list" on /><Tool n="gridArrow" /></span>
      </div>
      <div className="h-[21px] shrink-0 bg-[#c3c3c3]" />
      <div className="flex min-h-0 flex-1">
        <div className="min-w-0 flex-1 overflow-hidden bg-[repeating-linear-gradient(#f0f0f0_0_18px,#fff_18px_19px)]">
          <ul role="tree" className="flex h-full flex-col">
            {TREE.map(([lvl, dir, icon, text, tone, weight], i) => (
              <li key={i} role="treeitem" className={`flex h-[19px] shrink-0 border-b border-white ${TONE[tone] || "bg-[#f0f0f0]"}`}>
                <span className={`flex w-[155px] items-center overflow-hidden border-r border-[#c8c8c8] ${INDENT[lvl]} ${tone === "sel" ? "outline outline-dashed -outline-offset-1 outline-[#777]" : ""}`}>
                  <span className="w-[10px] shrink-0">{dir && <Tri dir={dir} />}</span>
                  <Icon n={icon} className="mr-1 ml-[5px] size-4" />
                  <span className={`leading-[18px] whitespace-nowrap ${weight || ""}`}>{text}</span>
                </span>
              </li>
            ))}
            <li className="w-[155px] flex-1 border-r border-[#c8c8c8]" aria-hidden="true" />
          </ul>
        </div>
        <div className="flex w-[18px] shrink-0 flex-col bg-[#c3c3c3]">
          <ScrollBtn dir="u" />
          <span className="h-[113px]" />
          <ThumbV className="h-[39%]" />
          <span className="flex-1" />
          <ScrollBtn dir="d" />
        </div>
      </div>
      <div className="flex h-[18px] shrink-0 bg-[#c3c3c3] pr-[18px]">
        <ScrollBtn dir="l" />
        <ThumbH className="ml-px w-[130px]" />
        <span className="flex-1" />
        <ScrollBtn dir="r" />
      </div>
      <section className="flex h-[241px] shrink-0 flex-col border-t-[3px] border-[#1a2236]">
        <Section dir="d" className="h-[22px]">详细视图</Section>
        <div className="h-6 shrink-0 border-b border-[#777] bg-[#cdcdcd]" />
        <div className="h-[27px] shrink-0 bg-[#e8eaea]" />
        <table className="w-full shrink-0 table-fixed">
          <thead>
            <tr className="h-[19px] border-y border-[#a8a8a8] bg-linear-to-b from-[#e2e2e2] to-[#c8c8c8]">
              <th aria-label="图标" className="w-[18px] border-r border-[#a8a8a8]" />
              <th className="border-r border-[#a8a8a8] pl-1 text-left leading-4 font-normal">名称</th>
              <th aria-label="附加" className="w-[14px]" />
            </tr>
          </thead>
        </table>
        <div className="flex-1 bg-[repeating-linear-gradient(#f0f0f0_0_18px,#fff_18px_19px)]" />
        <div className="flex h-[18px] shrink-0 bg-[#c3c3c3]">
          <ScrollBtn dir="l" />
          <ThumbH className="mx-px flex-1" />
          <ScrollBtn dir="r" />
        </div>
      </section>
    </aside>
  );
}

const COLS = [
  ["", "w-[25px]"], ["", "w-[19px]"], ["名称", "w-[190px]"], ["数据类型", "w-[120px]"],
  ["偏移量", "w-[60px]"], ["默认值", "w-[100px]"], ["注释", ""], ["", "w-[18px]"],
];

function CodeEditor() {
  return (
    <section className="flex min-w-0 flex-1 flex-col bg-white">
      <PanelHead className="pr-[3px] pl-1">
        <span className="mr-[10px]"><Icon n="clip" /></span>
        <Crumbs items={["项目3", "PLC_1 [CPU 315-2 DP]", "程序块", "Main [OB1]"]} />
        <WinBtns names={["wMin", "wRest", "wMax", "wClose"]} />
      </PanelHead>
      <div className="h-[25px] shrink-0 border-b border-[#777] bg-[#cdcdcd]" />
      <div className="flex h-[27px] shrink-0 items-center bg-[#e8eaea] pl-[3px]">
        <Tool n="addRow" /><Tool n="addRow" /><Sep />
        <Tool n="goDoc" /><Sep />
        <Tool n="dbBack" /><Sep />
        <Tool n="blocks" /><Tool n="tags" on /><Tool n="comment" /><Caret /><Tool n="fav" on /><Sep />
        <Tool n="errUp" /><Tool n="errDn" /><Tool n="upDoc" /><Tool n="dnDoc" /><Tool n="indent" /><Tool n="expand" /><Sep />
        <Tool n="gotoLine" /><Tool n="indR" /><Tool n="indL" /><Tool n="align" /><Tool n="cmt" /><Tool n="uncmt" /><Sep />
        <Tool n="bmNew" /><Tool n="bmNext" /><Tool n="bmPrev" /><Sep />
        <Tool n="searchGray" /><Tool n="glasses" /><Tool n="glasses2" /><Sep />
        <span className="mb-2"><Tri /></span>
        <span className="mr-3 ml-auto"><Tool n="panelUser" /></span>
      </div>
      <h3 className="h-[21px] shrink-0 bg-[#d8d8d8] pl-[25px] text-sm leading-5 font-semibold">Main</h3>
      <table className="w-full shrink-0 table-fixed border-b-[3px] border-[#f0f0f0]">
        <thead>
          <tr className="h-[19px] border-y border-[#a8a8a8] bg-linear-to-b from-[#e6e6e6] to-[#cdcdcd]">
            {COLS.map(([t, w], i) => (
              <th key={i} className={`${w} border-r border-[#a8a8a8] pl-[3px] text-left leading-4 font-normal`}>{t}</th>
            ))}
          </tr>
        </thead>
      </table>
      <div className="flex h-[7px] shrink-0 justify-center gap-[10px] border-y border-[#8a8a8a] bg-[#dcdcdc]">
        <button aria-label="折叠" className="flex w-6 items-center justify-center bg-[#c4c4c4]"><Tri dir="u" className="size-[6px]" /></button>
        <button aria-label="展开" className="flex w-6 items-center justify-center bg-[#c4c4c4]"><Tri dir="d" className="size-[6px]" /></button>
      </div>
      <div className="flex min-h-0 flex-1">
        <div className="w-[18px] shrink-0 bg-[#b3b3b3]" />
        <div className="w-2 shrink-0 border-x border-[#8a8a8a] bg-[#e8eaea]" />
        <div className="flex min-w-0 flex-1 flex-col">
          <div className="flex h-9 shrink-0 gap-[2px] bg-[#e8eaea] pt-[2px] pl-[2px] text-[9px] font-bold text-[#14235e]">
            {["", "CASE", "FOR", "WHILE", "", ""].map((t, i) => (
              <button key={i} aria-label={t || "收藏"} className={`w-8 pb-3 text-center ${t === "WHILE" ? "bg-[#e6f0ff] text-[#6b7a99]" : "bg-white"}`}>{t}</button>
            ))}
          </div>
          <div className="w-5 flex-1 border-r border-[#8a8a8a] bg-[#c8c8c8]" />
          <div className="flex h-[18px] shrink-0 bg-[#e8eaea]">
            <div className="flex min-w-0 flex-1 bg-[#c3c3c3]">
              <ScrollBtn dir="l" />
              <ThumbH className="ml-px w-[227px]" />
              <span className="flex-1" />
              <ScrollBtn dir="r" />
            </div>
            <Combo label="缩放" value="100%" className="ml-[6px] w-[155px]" />
            <span className="mr-[18px] ml-[19px]"><ZoomSlider value={35} ticks={15} label="编辑器缩放" /></span>
          </div>
        </div>
      </div>
    </section>
  );
}

function Rack() {
  return (
    <div className="absolute top-[57px] left-[135px]">
      <span className="absolute top-[25px] left-2 origin-left -rotate-45 text-xs leading-4 whitespace-nowrap">Slave_1</span>
      <div className="mt-[43px] border-y border-[#d5ddeb] py-px">
        <svg viewBox="0 0 292 150" className="h-[150px] w-[292px]" shapeRendering="crispEdges" aria-hidden="true">
          <rect width="292" height="150" fill="#a3a8c2" />
          <path d="M92.500 0v149M117.500 0v149M142.500 0v149M167.500 0v149M193.500 0v149M218.500 0v149M243.500 0v149M268.500 0v149" stroke="#a9adb8" />
          <path d="M67.500 0v150" stroke="#33384e" />
          <path d="M0 149.500h292" stroke="#000" />
          <rect x="12" y="27" width="43" height="8" fill="#3c4258" />
          <rect x="12" y="41" width="25" height="9" fill="#3c4258" />
          <rect x="26" y="82" width="14" height="37" fill="#98a0b4" stroke="#f0f" strokeWidth="2" />
          <path d="M29 95l8-3v20l-8-3z" fill="#7d8798" />
          <rect x="31" y="86" width="4" height="3" fill="#000" />
          <rect x="31" y="115" width="4" height="3" fill="#000" />
          <rect x="145" y="55" width="70" height="40" fill="#6a6a6a" />
          <text x="179" y="79" textAnchor="middle" fontSize="10" fontWeight="700" fill="#fff" fontFamily="Liberation Sans, sans-serif">DP-NORM</text>
        </svg>
      </div>
    </div>
  );
}

function DeviceView() {
  return (
    <section className="flex min-w-0 flex-1 flex-col border-l-[3px] border-[#1a2236] bg-white">
      <PanelHead className="pr-[3px] pl-1">
        <span className="mr-[10px]"><Icon n="clipH" /></span>
        <Crumbs items={["项目3", "未分组的设备", "Slave_1"]} />
        <WinBtns names={["wMin", "wRest", "wMax", "wClose"]} />
      </PanelHead>
      <div role="tablist" className="flex h-[25px] shrink-0 items-stretch justify-end gap-px border-b border-[#777] bg-[#cdcdcd] pt-[3px] pr-1">
        <Tab icon="topo" className="w-[105px] pl-[2px]">拓扑视图</Tab>
        <Tab icon="net" className="w-[105px] pl-[2px]">网络视图</Tab>
        <Tab icon="devView" on className="w-[105px] pl-[2px]">设备视图</Tab>
      </div>
      <div className="flex min-h-0 flex-1">
        <div className="flex min-w-0 flex-1 flex-col">
          <div className="flex h-[27px] shrink-0 items-center bg-[#e8eaea] pl-[3px]">
            <Tool n="netIn" /><Sep />
            <Combo label="设备" value="Slave_1 [IANP3801-PB0]" className="mx-1 w-[180px]" /><Sep />
            <Tool n="width" /><Sep /><Tool n="nameBack" /><Sep />
            <Tool n="penEye" on /><Tool n="crosshair" /><Tool n="cols" on /><Sep />
            <Tool n="zoomIn" /><Caret />
            <span className="mr-3 ml-auto"><Tool n="panelUser" /></span>
          </div>
          <div className="flex min-h-0 flex-1">
            <div className="relative min-w-0 flex-1 overflow-hidden"><Rack /></div>
            <div className="flex w-[18px] shrink-0 flex-col bg-[#c3c3c3]">
              <ScrollBtn dir="u" />
              <ThumbV className="mt-px h-[79px]" />
              <span className="flex-1" />
              <ScrollBtn dir="d" />
            </div>
          </div>
          <div className="flex h-[18px] shrink-0 bg-[#e8eaea]">
            <div className="flex min-w-0 flex-1 bg-[#c3c3c3]">
              <ScrollBtn dir="l" />
              <ThumbH className="ml-px w-9" />
              <span className="flex-1" />
              <ScrollBtn dir="r" />
            </div>
            <Combo label="缩放" value="100%" className="ml-[6px] w-[155px]" />
            <span className="mr-[18px] ml-[19px]"><ZoomSlider value={50} ticks={7} label="视图缩放" /></span>
            <button aria-label="概览导航" className="flex size-[18px] items-center justify-center bg-white"><Icon n="overviewBtn" /></button>
          </div>
        </div>
        <div className="mt-[3px] flex w-2 shrink-0 flex-col items-center border-x border-[#8a8a8a] bg-[#dcdcdc]">
          <span className="h-[277px]" />
          <button aria-label="收起" className="flex h-6 w-[6px] items-center justify-center border-y border-[#8a8a8a] bg-[#bbb]"><Tri dir="l" className="size-[6px]" /></button>
          <span className="h-[10px]" />
          <button aria-label="展开" className="flex h-6 w-[6px] items-center justify-center border-y border-[#8a8a8a] bg-[#ccc] text-[#777]"><Tri className="size-[6px]" /></button>
        </div>
        <div className="mt-[3px] flex w-[17px] shrink-0 justify-center overflow-hidden bg-[#b2b2b2] pt-[280px] text-[13px] leading-4 font-bold text-white">
          <span className="[text-orientation:sideways] [writing-mode:vertical-rl]">设备数据</span>
        </div>
      </div>
    </section>
  );
}

function Inspector() {
  return (
    <section className="flex h-[270px] shrink-0 flex-col border-t-[3px] border-[#1a2236] bg-[#e8eaea]">
      <div className="flex h-[27px] shrink-0 border-b-[3px] border-[#f0f0f0] bg-[#b2b2b2] pr-[3px]">
        <div role="tablist" className="mt-1 ml-auto flex items-stretch gap-[2px]">
          <Tab icon="props" on className="w-[74px] pl-px">属性</Tab>
          <Tab icon="infoTab" tail="infoDot" className="w-[81px] pr-1 pl-px">信息</Tab>
          <Tab icon="steth" className="w-[75px] pl-px">诊断</Tab>
        </div>
        <div className="ml-4 flex items-center"><WinBtns names={["wRest", "wRows", "wDown"]} /></div>
      </div>
      <div className="flex h-[25px] shrink-0 items-stretch border-b border-[#777] bg-[#cdcdcd] pt-[3px] pl-[6px]">
        <Tab on className="w-[63px] pl-[11px]">常规</Tab>
      </div>
      <div className="flex flex-col gap-[2px] pt-[34px] pl-[63px]">
        <h3 className="text-[15px] leading-6 font-bold">无可用“属性”。</h3>
        <p className="leading-[18px]">目前未显示任何“属性”。可能未选择对象，或者所选对象没有可显示的属性。</p>
      </div>
    </section>
  );
}

function Catalog() {
  const small = "flex h-[20px] w-6 shrink-0 items-center justify-center border border-[#8a8a8a] bg-linear-to-b from-[#f0f0f0] to-[#c9c9c9]";
  return (
    <aside className="flex w-[194px] shrink-0 flex-col border-r-2 border-l-[3px] border-[#1a2236] bg-[#e8eaea]">
      <PanelHead className="pr-1 pl-[6px]">
        <h2 className="flex-1 text-[15px] font-medium text-white">硬件目录</h2>
        <WinBtns names={["wRest", "wCols", "wRight"]} />
      </PanelHead>
      <h3 className="h-[25px] shrink-0 border-b border-[#777] bg-linear-to-b from-[#f4f4f4] from-50% to-[#e4e4e4] to-50% pl-[6px] text-[15px] leading-[22px] font-bold">选项</h3>
      <div className="flex h-[27px] shrink-0 items-center justify-end pr-[2px]"><Tool n="panel" /></div>
      <Section dir="d" className="mb-1 h-6 border-t-[3px] border-t-[#989898]">目录</Section>
      <div className="flex shrink-0 gap-1 px-1">
        <input aria-label="搜索" placeholder="<搜索>" className="h-[20px] w-0 flex-1 border border-[#8a8a8a] bg-white px-1 leading-4 placeholder:text-black" />
        <button aria-label="向下搜索" className={small}><Icon n="binDn" /></button>
        <button aria-label="向上搜索" className={small}><Icon n="binUp" /></button>
      </div>
      <div className="mt-[6px] flex h-5 shrink-0 items-start px-1">
        <span className="relative mt-[2px] size-[15px] shrink-0">
          <input id="filter" type="checkbox" defaultChecked className="block size-[15px] appearance-none border border-[#3a5f96] bg-linear-to-br from-[#1558b4] to-[#5fd4f0]" />
          <svg viewBox="0 0 16 16" className="pointer-events-none absolute inset-0 size-[15px]" fill="none" aria-hidden="true"><path d="M3 8l4 4 6-8" stroke="#fff" strokeWidth="2.5" /></svg>
        </span>
        <label htmlFor="filter" className="ml-1 w-[41px] leading-[19px]">过滤</label>
        <Combo label="过滤范围" value="<全部>" className="w-[90px]" />
        <button aria-label="目录设置" className={`ml-auto ${small}`}><Icon n="catWrench" /></button>
      </div>
      <div className="mx-[5px] min-h-0 flex-1 overflow-hidden bg-[repeating-linear-gradient(#f0f0f0_0_18px,#e5e7e7_18px_19px)]">
        <ul>
          <li className="flex h-[19px] items-center pl-[3px]">
            <Tri />
            <Icon n="fMod" className="mr-[2px] ml-[2px] size-4" />
            <span className="bg-[#c3cad6] px-[2px] leading-[18px]">前端模块</span>
          </li>
          {CATALOG.map((c) => (
            <li key={c} className="flex h-[19px] items-center gap-[3px] pl-[15px]">
              <Icon n="mod" />
              <span className="leading-[18px] whitespace-nowrap">{c}</span>
            </li>
          ))}
        </ul>
      </div>
      <Section dir="r" className="h-6 border-t-[3px] border-t-[#989898]">信息</Section>
    </aside>
  );
}

function RightTabs() {
  const items = [
    ["bookCat", "硬件目录", "h-[105px]", true],
    ["steth", "在线工具", "h-[105px]"],
    ["task", "任务", "h-[73px]"],
    ["book", "库", "h-[57px]"],
  ];
  return (
    <nav className="flex w-[23px] shrink-0 flex-col gap-[3px] bg-[#b3b3b3] pt-[30px] pr-[3px]">
      {items.map(([icon, t, h, on]) => (
        <button key={t} className={`flex w-5 shrink-0 flex-col items-center gap-1 border border-l-0 border-[#777] pt-[2px] ${h} ${on ? "bg-[#e8eaea] font-bold" : "bg-[#d4d4d4] font-medium text-[#4d4d4d]"}`}>
          <Icon n={icon} />
          <span className="text-[15px] leading-4 [text-orientation:sideways] [writing-mode:vertical-rl]">{t}</span>
        </button>
      ))}
    </nav>
  );
}

const Field = ({ id, label, dim, children }) => (
  <div className="flex h-6 items-start">
    <label htmlFor={id} className={`w-[196px] shrink-0 pr-[10px] text-right leading-[18px] ${dim ? "text-[#8a8a8a]" : ""}`}>{label}:</label>
    {children}
  </div>
);

function ModuleDialog() {
  const box = "h-[18px] w-[180px] border border-[#8a8a8a] px-[3px] leading-4";
  return (
    <div role="dialog" aria-label="Input 1 word_1 [Module]" className="absolute top-[219px] left-[224px] w-[788px] border border-black bg-[#cdcdcd] outline outline-white">
      <header className="flex h-5 items-center bg-[linear-gradient(#a4a4a4,#7c7c7c_7px,#575757_7px)] pl-[5px]">
        <h2 className="flex-1 text-[13px] leading-4 font-bold text-[#cfcfcf]">Input 1 word_1 [Module]</h2>
        <button aria-label="关闭" className="flex h-5 w-[19px] items-center justify-center border-l border-[#333]"><Icon n="wClose" className="size-[15px]" /></button>
      </header>
      <div className="px-[14px] pt-4 pb-[13px]">
        <div role="tablist" className="flex h-[22px] items-stretch gap-[2px] border-b border-[#777] pl-[6px]">
          <Tab on className="w-[62px] pl-[11px]">常规</Tab>
          <Tab className="w-[81px] pl-[11px]">IO 变量</Tab>
          <Tab className="w-[94px] pl-[11px]">系统常数</Tab>
          <Tab className="w-[62px] pl-[11px]">文本</Tab>
        </div>
        <div className="mt-px flex h-[324px] overflow-hidden border-t border-[#8a8a8a] bg-[#e8eaea]">
          <ul className="w-[198px] shrink-0 bg-[repeating-linear-gradient(#f0f0f0_0_18px,#e5e7e7_18px_19px)] pt-px">
            <li className="flex h-[19px] items-center gap-1 pl-1"><Tri /><span>常规</span></li>
            <li className="flex h-[19px] items-center pl-4"><span className="bg-[#c3cad6] px-[2px] leading-[18px]">I/O 地址</span></li>
            <li className="flex h-[19px] items-center pl-[18px]">硬件中断</li>
          </ul>
          <div className="flex w-2 shrink-0 flex-col items-center border-x border-[#777] bg-[#dcdcdc]">
            <span className="h-[132px] shrink-0" />
            <button aria-label="收起" className="flex h-6 w-[6px] shrink-0 items-center justify-center border-y border-[#8a8a8a] bg-[#bbb]"><Tri dir="l" className="size-[6px]" /></button>
            <span className="h-[10px] shrink-0" />
            <button aria-label="展开" className="flex h-6 w-[6px] shrink-0 items-center justify-center border-y border-[#8a8a8a] bg-[#bbb]"><Tri className="size-[6px]" /></button>
          </div>
          <div className="min-w-0 flex-1 overflow-hidden pr-[6px] pl-3">
            <div className="flex h-9 items-center gap-[10px] pt-px pl-[3px]">
              <h3 className="text-[15px] leading-5 font-medium whitespace-nowrap">I/O <b>地址</b></h3>
              <span className="mt-3 h-px flex-1 bg-black" />
            </div>
            <div className="h-[102px] bg-[#cdcdcd] pt-[25px] pr-3 pl-2">
              <Field id="ioType" label="输入/输出类型" dim><Combo id="ioType" value="输入" disabled className="flex-1" /></Field>
              <Field id="vendor" label="制造商特定数据" dim>
                <input id="vendor" disabled className="h-[18px] w-0 flex-1 border border-[#8a8a8a] bg-[#cdcdcd]" />
              </Field>
              <p className="pl-[200px] leading-[18px]">（最大 14 字节的十六进制数，由逗号或空格分隔）</p>
            </div>
            <div className="mt-[6px] bg-[#cdcdcd] pt-[3px] pr-3 pb-1 pl-2">
              <h4 className="mb-[19px] pl-[6px] text-[15px] leading-5 font-bold">输入地址</h4>
              <Field id="start" label="起始地址"><input id="start" defaultValue="272" className={`${box} bg-white`} /></Field>
              <Field id="len" label="长度" dim>
                <span className="relative flex">
                  <input id="len" disabled defaultValue="1" className={`${box} bg-[#cdcdcd] text-[#8a8a8a]`} />
                  <span className="absolute inset-y-0 right-0 flex w-[18px] flex-col border border-[#8a8a8a] bg-[#e4e4e4] text-[#777]">
                    <button disabled aria-label="增加" className="flex h-2 items-center justify-center"><Tri dir="u" /></button>
                    <button disabled aria-label="减少" className="flex h-2 items-center justify-center"><Tri dir="d" /></button>
                  </span>
                </span>
              </Field>
              <Field id="end" label="结束地址"><input id="end" readOnly defaultValue="273" className={`${box} bg-[#e0e0e0]`} /></Field>
              <Field id="img" label="过程映像" dim><Combo id="img" value="无" disabled className="flex-1" /></Field>
              <Field id="unit" label="单元" dim><Combo id="unit" value="字" disabled className="flex-1" /></Field>
              <Field id="cons" label="一致性" dim><Combo id="cons" value="总长度" disabled className="flex-1" /></Field>
            </div>
          </div>
          <div className="flex w-[18px] shrink-0 flex-col bg-[#c3c3c3] pt-px">
            <ScrollBtn dir="u" />
            <ThumbV className="h-[26px]" />
            <span className="flex-1" />
            <ScrollBtn dir="d" />
          </div>
        </div>
      </div>
      <footer className="flex h-[51px] items-start justify-end gap-[6px] border-b-[6px] border-[#575757] bg-[#b2b2b2] pt-3 pr-3">
        <button className="h-[20px] w-[90px] border-2 border-[#8a8a8a] border-t-[#1c8a2c] bg-linear-to-b from-[#c8ecc2] from-40% to-[#97d48f] to-50% leading-4">确定</button>
        <button className="h-[20px] w-[90px] border border-[#8a8a8a] bg-linear-to-b from-[#f2f2f2] from-40% to-[#d0d0d0] to-60% leading-4">取消</button>
      </footer>
    </div>
  );
}

function StatusBar() {
  return (
    <footer className="shrink-0">
      <div className="flex h-[29px] items-center bg-[#1c1c1c] text-white">
        <button className="flex w-[181px] shrink-0 items-center gap-[6px] pl-[31px] text-sm font-bold"><Icon n="wLeft" />Portal 视图</button>
        <nav className="flex gap-[3px]">
          {OPEN_EDITORS.map(([icon, t]) => (
            <button key={t} className={`flex h-5 w-[113px] items-center gap-1 overflow-hidden pl-[2px] leading-5 whitespace-nowrap text-black ${t === "Slave_1" ? "bg-white" : "bg-[#c3c3c3]"}`}>
              <Icon n={icon} />{t}
            </button>
          ))}
        </nav>
        <button aria-label="信息窗口" className="mr-[6px] ml-auto flex size-5 shrink-0 items-center justify-center bg-[#c9c9c9]"><Icon n="tray" /></button>
        <p className="flex h-full w-[312px] shrink-0 items-center gap-[5px] border-l border-[#555] pl-[3px]"><Icon n="ok" />项目 项目3 已成功保存。</p>
      </div>
      <div className="flex h-2 items-start overflow-hidden bg-[linear-gradient(#6b2a24,#5a1f1a_5px,#350c08_5px,#5f221d_6px)]">
        <span className="ml-12 h-2 w-[344px] bg-[#6e3630]" />
        <span className="ml-[443px] h-2 w-12 bg-[#a92a20]" />
        <span className="mt-1 mr-[74px] ml-auto leading-3 text-white">11:21</span>
      </div>
    </footer>
  );
}

export default function App() {
  return (
    <div className="relative flex h-screen w-full flex-col overflow-hidden bg-[#1a2236] text-xs text-black [font-family:'Open_Sans','Noto_Sans_CJK_SC',sans-serif]">
      <TitleBar />
      <MainBar />
      <main className="flex min-h-0 flex-1">
        <nav className="flex w-[23px] shrink-0 flex-col items-center bg-[#b3b3b3]">
          <div className="h-[25px] w-full border-b border-white" />
          <button className="flex h-[221px] w-full items-center justify-center border-b border-white text-[15px] leading-5 font-bold text-white">
            <span className="rotate-180 [text-orientation:sideways] [writing-mode:vertical-rl]">设备与网络</span>
          </button>
        </nav>
        <ProjectTree />
        <div className="flex min-w-0 flex-1 flex-col">
          <div className="flex min-h-0 flex-1">
            <CodeEditor />
            <DeviceView />
          </div>
          <Inspector />
        </div>
        <Catalog />
        <RightTabs />
      </main>
      <StatusBar />
      <ModuleDialog />
    </div>
  );
}
